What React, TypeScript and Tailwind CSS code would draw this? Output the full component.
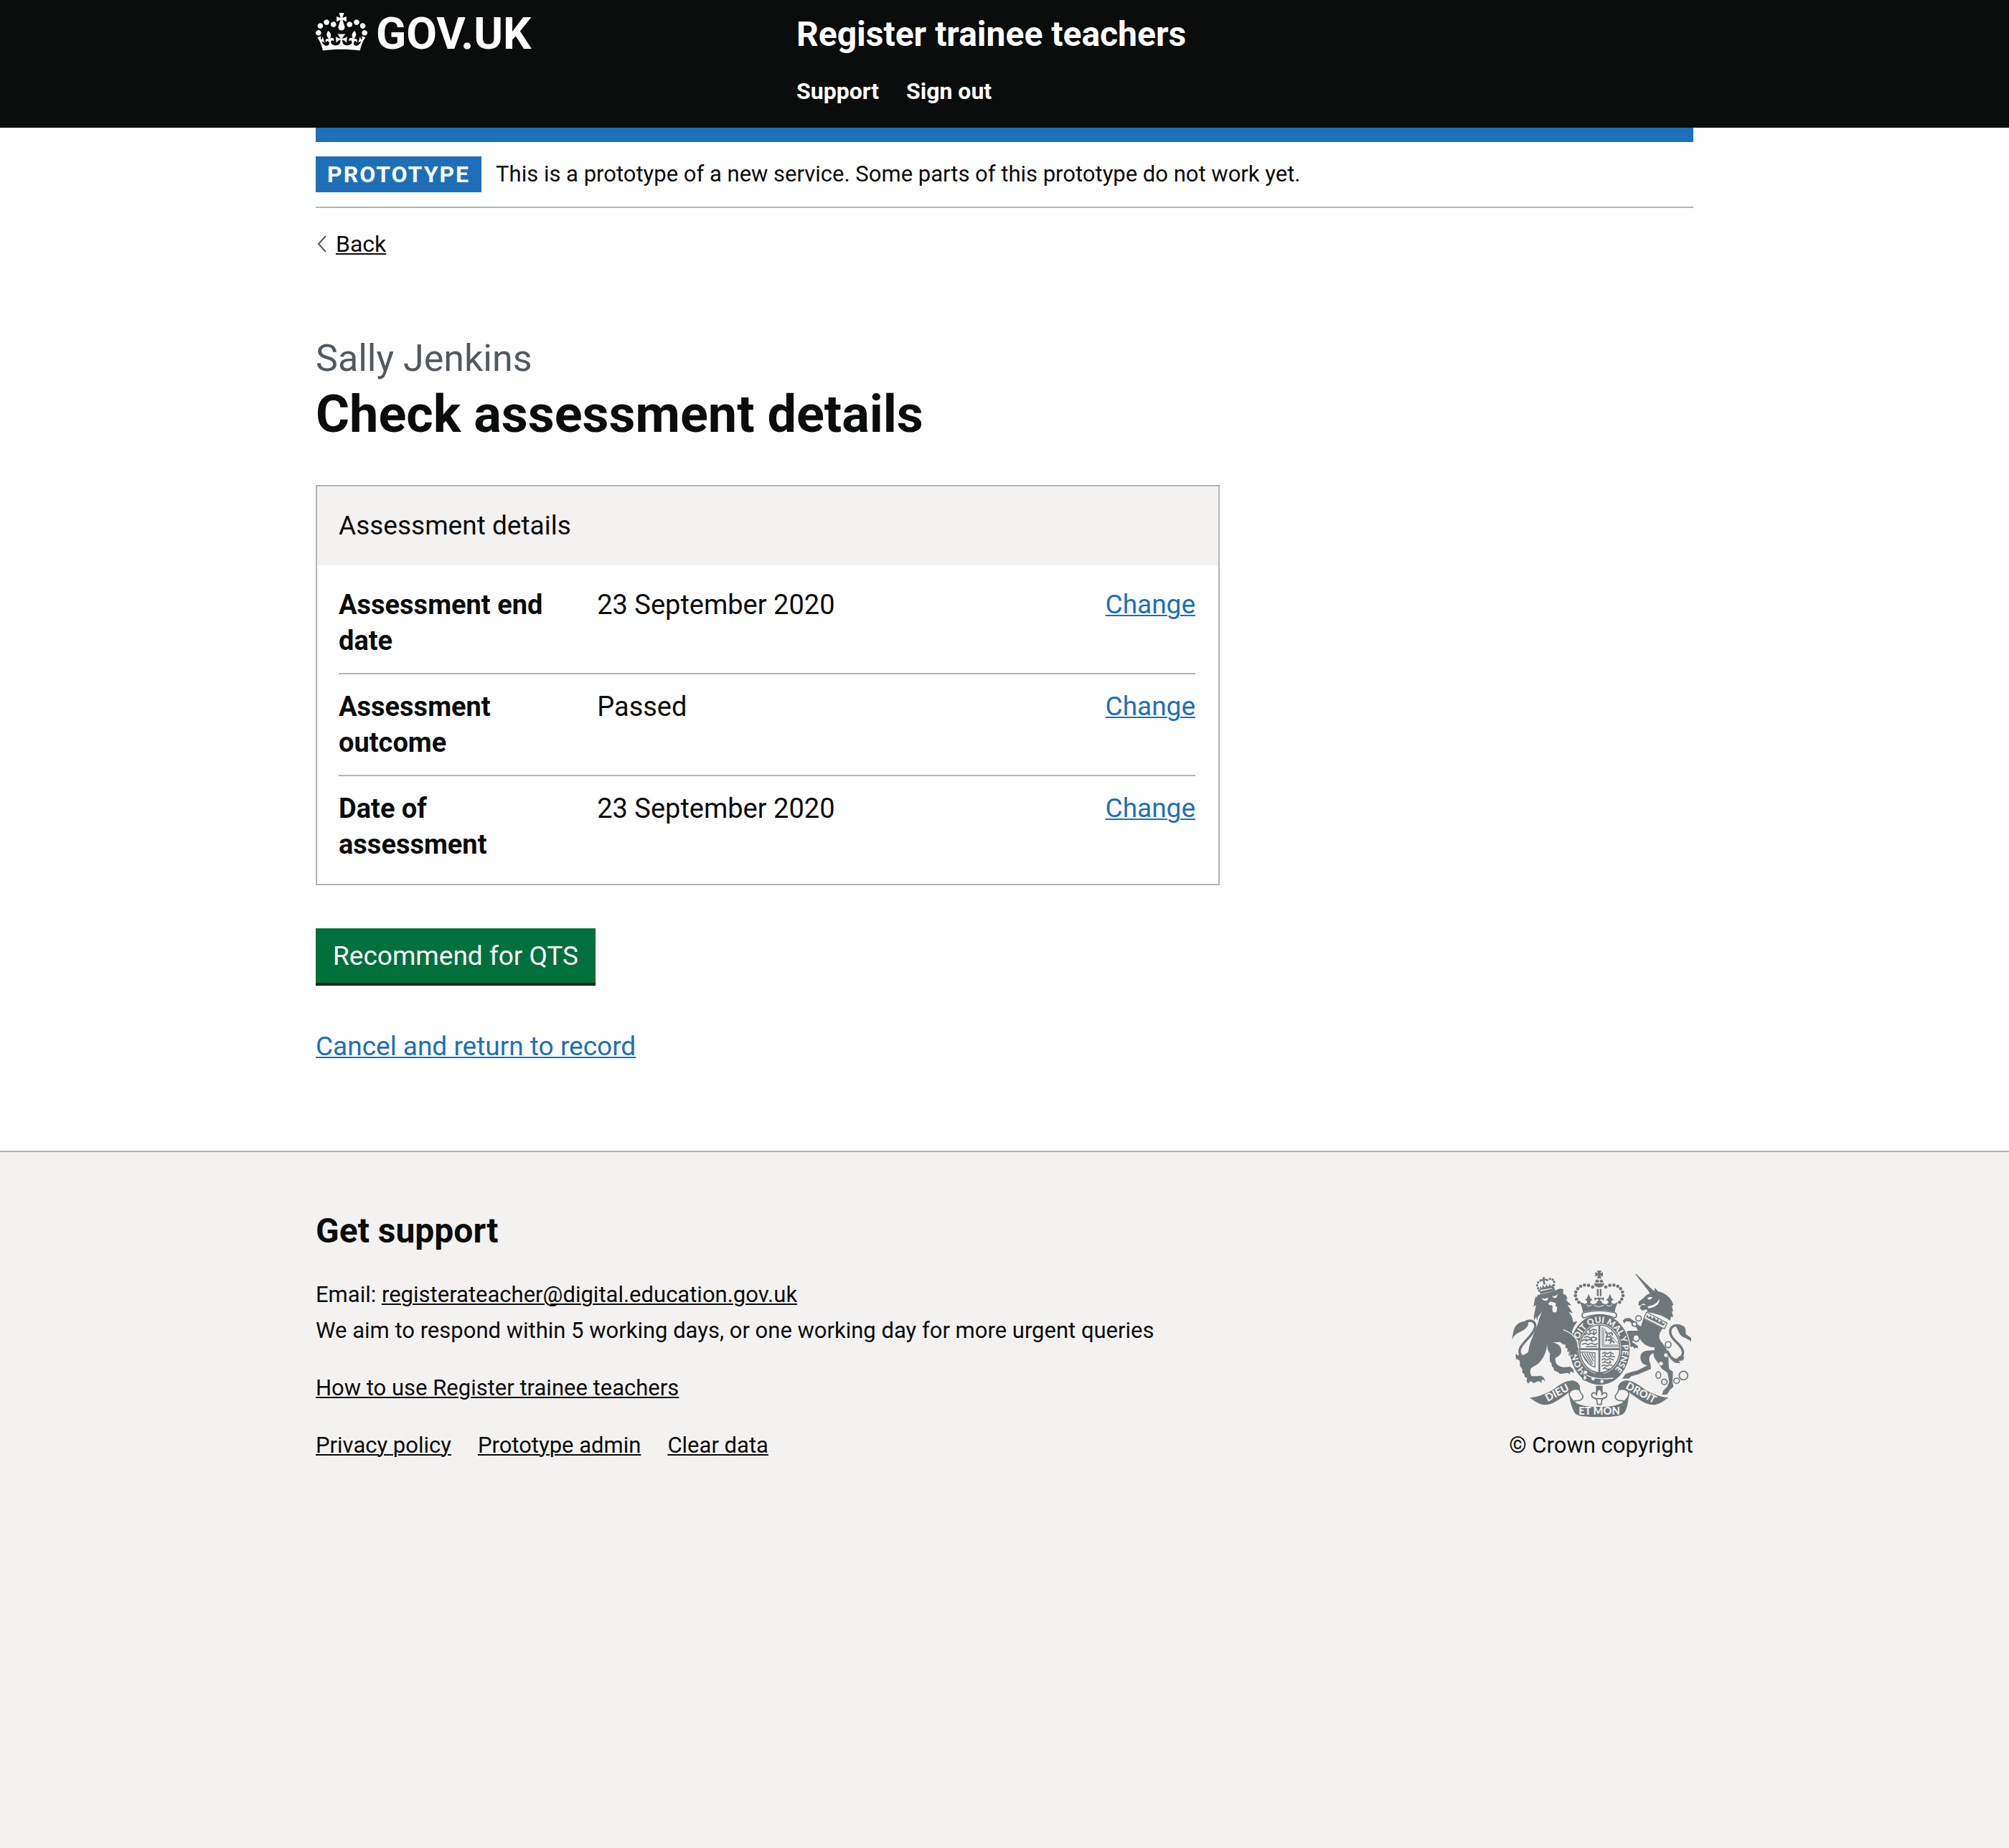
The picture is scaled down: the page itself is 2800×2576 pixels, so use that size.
import React from "react";

const answers = [
  { key: "Assessment end date", value: "23 September 2020" },
  { key: "Assessment outcome", value: "Passed" },
  { key: "Date of assessment", value: "23 September 2020" },
];

const footerLinks = ["Privacy policy", "Prototype admin", "Clear data"];

const link = "underline decoration-2 underline-offset-2";

function CrownLogo() {
  return (
    <svg viewBox="0 0 132 97" className="h-[53px] w-[72px] shrink-0" fill="currentColor" aria-hidden="true">
      <path
        fillRule="evenodd"
        d="M25 30.2c3.5 1.5 7.7-.2 9.1-3.7 1.5-3.6-.2-7.8-3.9-9.2-3.6-1.4-7.6.3-9.1 3.9-1.4 3.5.3 7.5 3.9 9zM9 39.5c3.6 1.5 7.8-.2 9.2-3.7 1.5-3.6-.2-7.8-3.9-9.1-3.6-1.5-7.6.2-9.1 3.8-1.4 3.5.3 7.5 3.8 9zM4.4 57.2c3.5 1.5 7.7-.2 9.1-3.8 1.5-3.6-.2-7.7-3.9-9.1-3.5-1.5-7.6.3-9.1 3.8-1.4 3.5.3 7.6 3.9 9.1zm38.3-21.4c3.5 1.5 7.7-.2 9.1-3.8 1.5-3.6-.2-7.7-3.9-9.1-3.6-1.5-7.6.3-9.1 3.8-1.3 3.6.4 7.7 3.9 9.1zm64.4-5.6c-3.6 1.5-7.8-.2-9.1-3.7-1.5-3.6.2-7.8 3.8-9.2 3.6-1.4 7.7.3 9.2 3.9 1.3 3.5-.4 7.5-3.9 9zm15.9 9.3c-3.6 1.5-7.7-.2-9.1-3.7-1.5-3.6.2-7.8 3.7-9.1 3.6-1.5 7.7.2 9.2 3.8 1.5 3.5-.3 7.5-3.8 9zm4.7 17.7c-3.6 1.5-7.8-.2-9.2-3.8-1.5-3.6.2-7.7 3.9-9.1 3.6-1.5 7.7.3 9.2 3.8 1.3 3.5-.4 7.6-3.9 9.1zM89.3 35.8c-3.6 1.5-7.8-.2-9.2-3.8-1.4-3.6.2-7.7 3.9-9.1 3.6-1.5 7.7.3 9.2 3.8 1.4 3.6-.3 7.7-3.9 9.1zM69.7 17.7l8.9 4.7V9.3l-8.9 2.8c-.2-.3-.5-.6-.9-.9L72.4 0H59.6l3.5 11.2c-.3.3-.6.5-.9.9l-8.8-2.8v13.1l8.8-4.7c.3.3.6.7.9.9l-5 15.4v.1c-.2.8-.4 1.6-.4 2.4 0 4.1 3.1 7.5 7 8.1h.2c.3 0 .7.1 1 .1.4 0 .7 0 1-.1h.2c4-.6 7.1-4.1 7.1-8.1 0-.8-.1-1.7-.4-2.4V34l-5.1-15.4c.4-.2.7-.6 1-.9zM66 92.8c16.9 0 32.8 1.1 47.1 3.2 4-16.9 8.9-26.7 14-33.5l-9.6-3.4c1 4.9 1.1 7.2 0 10.2-1.5-1.4-3-4.3-4.2-8.7L108.6 76c2.8-2 5-3.2 7.5-3.3-4.4 9.4-10 11.9-13.6 11.2-4.3-.8-6.3-4.6-5.6-7.9 1-4.7 5.7-5.9 8-.5 4.3-8.7-3-11.4-7.6-8.8 7.1-7.2 7.9-13.5 2.1-21.1-8 6.1-8.1 12.3-4.5 20.8-4.7-5.4-12.1-2.5-9.5 6.2 3.4-5.2 7.9-2 7.2 3.1-.6 4.3-6.4 7.8-13.5 7.2-10.3-.9-10.9-8-11.2-13.8 2.5-.5 7.1 1.8 11 7.3L80.2 60c-4.1 4.4-8 5.3-12.3 5.4 1.4-4.4 8-11.6 8-11.6H55.5s6.4 7.2 7.9 11.6c-4.2-.1-8-1-12.3-5.4l1.4 16.4c3.9-5.5 8.5-7.7 10.9-7.3-.3 5.8-.9 12.8-11.1 13.8-7.2.6-12.9-2.9-13.5-7.2-.7-5 3.8-8.3 7.1-3.1 2.7-8.7-4.6-11.6-9.4-6.2 3.7-8.5 3.6-14.7-4.6-20.8-5.8 7.6-5 13.9 2.2 21.1-4.7-2.6-11.9.1-7.7 8.8 2.3-5.5 7.1-4.2 8.1.5.7 3.3-1.3 7.1-5.7 7.9-3.5.7-9-1.8-13.5-11.2 2.5.1 4.7 1.3 7.5 3.3l-4.7-15.4c-1.2 4.4-2.7 7.2-4.3 8.7-1.1-3-.9-5.3 0-10.2l-9.5 3.4c5 6.9 9.9 16.7 14 33.5 14.8-2.1 30.8-3.2 47.7-3.2z"
      />
    </svg>
  );
}

const crownBeads = [
  [410, 135], [393, 128], [376, 127], [360, 132], [348, 142], [340, 156], [338, 171], [343, 186], [352, 199],
];
const lionCrownBeads = [
  [192, 108], [182, 116], [178, 128], [182, 140], [187, 150], [220, 106], [232, 101], [243, 104], [249, 114], [248, 127], [245, 138],
];
const chainLinks = [
  [602, 266, 12, 11], [585, 290, 10, 9], [592, 349, 13, 14], [726, 376, 12, 13], [685, 503, 10, 14],
  [710, 532, 12, 11], [761, 527, 12, 11], [790, 505, 18, 18],
];

/* Royal coat of arms: lion and unicorn holding the garter, with the motto ribbon below. */
function RoyalArms() {
  const ink = "#6f777b";
  const paper = "#f3f2f1";
  return (
    <svg viewBox="72 63 750 618" className="h-[206px] w-[250px]" fill={ink} aria-hidden="true">
      {/* lion */}
      <path d="M172 182l10-14c30-6 64-14 92-26l14 2-2 18 14 8 5 18-9-2 26 26-17-2 22 34-16-4c10 14 16 26 18 42l18-4-16 24-8 20 28 36 4 24-2 30-10 12-5-6-1 12-9-8-4 9-7-8-8-1 3-14-8-3 2-12-10-4 1-12-14-4-8-8-32 2c24 4 38 20 36 38-2 14-14 22-25 27 0 14 2 24 12 30 8 6 20 10 32 8l18-2 14 12 2 16-9-7-8 2 1 10-10-7-10 2-22 3-12-10-12-4-4-13-6-4-2-14-6-6c-2-12-2-24 0-34-8-10-12-22-12-38-4 30-12 56-38 80-14 10-28 14-32 24-2 10 0 20 4 28l20 0 20-2 12 8 6 16-8-7-8 2 2 12-12-8-10 2-10 6-16-8-10 10-6-10 2-14-10-4-2-12-8-6 0-14-10-14 0-28 10-12 14-2 10-8c4-30 8-46 16-64 10-28 24-54 30-82l12-30-16 20-4 18-4-18-8 16-2-18 10-46-11 6 4-24 6-26z" />
      <path d="M196 180c8 6 18 6 28-2l-2 12c-10 6-20 2-26-10zM240 172c8 4 16 0 24-8l-4 14c-6 6-16 4-20-6z" fill={paper} />
      <path d="M224 204l10-8 10 2 14 6-4 8 8 8-2 16c-4 8-14 8-18-2-2-8 2-14 0-22l-14-2z" fill={paper} />
      {/* lion's crown */}
      {lionCrownBeads.map(([x, y]) => (
        <circle key={`${x}-${y}`} cx={x} cy={y} r="5" />
      ))}
      <path d="M201 94l10 0-2 8 8-2 0 8-8-1 4 16-8 2-4-17-7 3-1-8 8 0zM188 154l62-14 4 9-62 15zM190 148l0-16 8 8 4-14 8 12 8-14 5 11 8-14 4 12 9-10 1 16z" />
      {/* lion's tail */}
      <path d="M72 356c6-20 4-44 18-60 16-16 36-20 50-14 4 6-2 20-14 30-18 14-38 12-54 44z" />
      <path d="M128 282c22-12 44-6 42 20-4 30-44 56-60 84-10 18-6 34 8 40" fill="none" stroke={ink} strokeWidth="10" />
      <path d="M163 392l-12 32-22 12 10 4-32 10-3-8-14-6-3-22 12 8c4-10 12-10 16-10l-8 10c18-2 28-10 36-16z" />

      {/* unicorn's body, then neck and head */}
      <path d="M622 268L704 308C688 326 684 342 694 360C704 374 716 384 722 402C730 422 726 450 730 478L746 490L744 530L748 552L732 566L722 584L700 586L706 568L722 552L730 532L724 496C714 484 702 484 692 466C684 446 666 442 664 412C646 418 642 440 652 456L654 478L600 500L572 508L562 518L534 518L548 498L574 490L598 484L640 462C622 462 612 452 610 432C608 408 626 398 668 400L670 388C640 386 620 374 608 352L594 366L578 358L576 366L598 380L600 392L590 388L586 394L578 384L568 386L564 370L548 346L546 328L558 318L600 318L592 302L578 294L566 280L550 278L542 288L536 276L546 266L564 264L582 276L598 292L612 300Z" />
      <path d="M588 81L593 81L658 144L668 152L670 138L684 154C704 158 722 168 734 184C742 194 746 204 748 212L741 212L747 238L741 236L747 262L738 258L734 276L722 268C700 252 670 246 640 240L636 228L618 234L606 222L614 214L602 212L603 196C614 188 626 180 636 168L650 162L644 152Z" />
      <path d="M638 182C644 176 652 176 660 178C656 188 646 192 638 182Z" fill={paper} />
      <path d="M688 184C694 204 672 222 642 224L640 216C664 212 682 204 688 184ZM606 212L624 204L634 212L622 210Z" fill={paper} />
      <path d="M636 240L722 286L710 310L624 266Z" fill={paper} stroke={ink} strokeWidth="4" />
      <path d="M634 262L638 250L645 262L654 254L657 268L668 260L676 274L684 268L686 282L698 276L704 288L714 286L706 298Z" />
      {chainLinks.map(([x, y, rx, ry]) => (
        <ellipse key={`${x}-${y}`} cx={x} cy={y} rx={rx} ry={ry} fill={paper} stroke={ink} strokeWidth="5" />
      ))}
      <circle cx="717" cy="420" r="8" fill={paper} />
      <circle cx="696" cy="455" r="8" fill={paper} />
      {/* unicorn's tail */}
      <path d="M752 294c20-4 40 2 46 14l2 24 22 16 0 16c-14-16-30-14-42-26-12-10-12-30-28-44z" />
      <path d="M776 298c-30-10-46 10-40 34 8 30 50 44 52 76 0 14-8 22-20 24" fill="none" stroke={ink} strokeWidth="10" />
      <path d="M724 396l16 28 14 10c8 0 14-2 20-6l20-2-6 16-18 2 8 10-22-2-16-12-18-22z" />

      {/* garter */}
      <ellipse cx="440" cy="397" rx="129" ry="150" fill={paper} />
      <ellipse cx="440" cy="397" rx="125" ry="147" />
      <ellipse cx="440" cy="394" rx="89" ry="105" fill={paper} />
      <path id="garter-line" d="M388 490A94 112 0 0 1 346 397A94 112 0 0 1 440 285A94 112 0 0 1 534 397A94 112 0 0 1 450 508" fill="none" />
      <text fill={paper} fontFamily="Lato" fontWeight="900" fontSize="36">
        <textPath href="#garter-line" startOffset="6">
          HONI <tspan dx="18">SOIT QUI MAL Y PENSE</tspan>
        </textPath>
      </text>
      {/* lion's forearm over the garter */}
      <path d="M290 306c24 10 46 30 54 56l6 30-6 8 2 22-10-9-6 14-9-12-9 4 2-16-9-4 3-12-12-4 2-10-12-6z" />
      <path d="M288 314c26 10 50 26 58 50l4 26" fill="none" stroke={paper} strokeWidth="4" />
      {/* shield */}
      <clipPath id="shield">
        <ellipse cx="440" cy="394" rx="82" ry="98" />
      </clipPath>
      <ellipse cx="440" cy="394" rx="84" ry="100" fill="none" stroke={ink} strokeWidth="5" />
      <g clipPath="url(#shield)" fill="none" stroke={ink}>
        <path d="M438 290v210M350 395h180" strokeWidth="8" />
        <path d="M376 336l10-8 8 6 12-6 10 6 12-12M374 346l14-4 12 6 14-4 14 6M364 362l10-8 10 6 14-6 12 8 18-8M366 376l12-6 12 6 16-6 12 6 14-4M392 312l10 6 12-6 14 4M396 320l6 12M416 318l-2 12M384 350v8M404 350l4 8M424 344v10M382 384h46" strokeWidth="5" />
        <path d="M450 414l10-6 12 6 12-6 14 8M450 426l12-4 12 6 14-4 16 4M448 440l10-6 12 6 12-6 16 6M450 452l12-4 12 6 14-4M448 466l10-6 12 6 12-6 12 4M452 478l10-4 12 6 8-4M462 414v10M484 414l2 10M462 442v8M482 442l2 8M462 468v8" strokeWidth="5" />
        <path d="M450 304v80h72M456 312v66h62M454 306l64 66" strokeWidth="3" />
        <path d="M462 322l10 10-4 12 14-2 8 10-12 6 14 2 10 8M476 330l14-4 4 12M470 350l-6 12M488 362l-6 10" strokeWidth="6" />
        <path d="M364 408c18-4 36 4 56 2v60c-22-4-44-28-54-60zM376 412l30 50M386 412l24 44M396 412l18 34M406 412l10 20M370 420l26 38" strokeWidth="4" />
      </g>
      <path d="M428 492h22l8 8-10 4h-20l-8-4z" />
      {/* garter buckle */}
      <path d="M374 486c20 22 54 34 90 36l36-10 4 10c-30 22-92 34-138-6z" />
      <path d="M372 494c20 18 58 30 124 22" fill="none" stroke={paper} strokeWidth="4" />
      <path d="M374 484c12-4 20 4 14 14l-12 4c12 4 14 16 2 24l-10-6c8-10 4-16 0-20z" fill={paper} stroke={ink} strokeWidth="4" />
      <circle cx="412" cy="519" r="7" fill={paper} />
      <circle cx="449" cy="530" r="7" fill={paper} />

      {/* crown */}
      {crownBeads.map(([x, y]) => (
        <React.Fragment key={`${x}-${y}`}>
          <circle cx={x} cy={y} r="7" />
          <circle cx={875 - x} cy={y} r="7" />
        </React.Fragment>
      ))}
      <path d="M428 66h19l-5 12 11-5v19l-11-6 5 13h-19l5-13-12 6V73l12 5zM424 104h12v12h-16zM440 104h11l5 12h-16zM416 120h43c-2 22-41 22-43 0zM428 143h7v30h-7zM440 143h7v30h-7z" />
      <path d="M360 198l18 8 10-6-2-8-8-4 8-6 7-18 8 18 8 6-8 6-1 8 12 6 16-6 0-8 8-2-8-13h20l-8 13 9 2 0 8 15 6 12-6-1-8-8-6 8-6 8-18 7 18 8 6-8 4-2 8 10 6 18-8c-8 16-12 28-13 42-40-12-88-12-134 0-1-14-5-26-13-42z" />
      <path d="M418 178l14 6-14 8zM457 178l-14 6 14 8z" />
      <path d="M384 209l10 7 12-6M416 212l20 6 22-6M468 211l12 5 12-7" fill="none" stroke={paper} strokeWidth="3" />
      <path d="M374 242c38-10 88-10 128 0 12 4 10 22-2 22-36-18-86-18-124 0-12 0-14-18-2-22z" fill={paper} stroke={ink} strokeWidth="5" />

      {/* fleur-de-lis badge */}
      <path d="M424 548h28v32h-28z" />
      <path d="M438 560c8 8 14 18 10 28 6-14 20-14 22-2 0 10-8 14-16 14l-6 10-2 16h-16l-2-16-6-10c-8 0-16-4-16-14 2-12 16-12 22 2-4-10 2-20 10-28zM418 602h40" fill={paper} stroke={ink} strokeWidth="5" />

      {/* motto ribbon */}
      <path d="M146 598c40-4 78-20 104-38 26-18 44-32 74-34 18 2 30 12 34 26l-2 16c-20-8-38-2-48 10-34 24-64 50-98 50-24 0-42-16-64-30z" />
      <path d="M728 598c-40-4-78-20-104-38-26-18-44-32-74-34-18 2-30 12-34 26l2 16c20-8 38-2 48 10 34 24 64 50 98 50 24 0 42-16 64-30z" />
      <path d="M356 566c-20-8-38-2-44 14 0 14 10 24 16 34l14-4c12 2 26-4 28-16 0-12-16-16-14-28z" fill={paper} stroke={ink} strokeWidth="5" />
      <path d="M518 566c20-8 38-2 44 14 0 14-10 24-16 34l-14-4c-12 2-26-4-28-16 0-12 16-16 14-28z" fill={paper} stroke={ink} strokeWidth="5" />
      <path d="M312 582c6 12 16 28 30 38 28 14 62 16 96 16s66-2 94-16c14-10 24-26 30-38-2 28-6 52-14 70-6 14-18 20-34 22-50 6-104 6-154 0-16-2-24-8-30-22-8-18-16-42-18-70z" />
      <g fill={paper} fontFamily="Lato" fontWeight="900" fontSize="44" textAnchor="middle">
        <text x="262" y="592" transform="rotate(-28 262 578)">DIEU</text>
        <text x="613" y="592" transform="rotate(28 613 577)">DROIT</text>
        <text x="438" y="670">ET MON</text>
      </g>
    </svg>
  );
}

function Header() {
  return (
    <header className="bg-[#0b0c0c] text-white">
      <div className="mx-auto flex max-w-[1920px] pt-[18px] pb-[31px]">
        <div className="w-[670px] shrink-0">
          <a href="#" aria-label="GOV.UK" className="flex w-fit items-start gap-[12px]">
            <CrownLogo />
            <span className="text-[62px] leading-[58px] font-bold">GOV.UK</span>
          </a>
        </div>
        <div className="flex flex-col gap-[29px]">
          <a href="#" className="text-[48px] leading-[60px] font-bold">
            Register trainee teachers
          </a>
          <nav className="flex gap-[38px] text-[32px] leading-[40px] font-bold">
            <a href="#">Support</a>
            <a href="#">Sign out</a>
          </nav>
        </div>
      </div>
    </header>
  );
}

export default function App() {
  return (
    <div className="flex min-h-screen flex-col bg-white font-[Roboto,sans-serif] text-[#0b0c0c]">
      <Header />

      <div className="mx-auto w-full max-w-[1920px]">
        <div className="flex items-center gap-[20px] border-t-20 border-b-2 border-t-[#1d70b8] border-b-[#b1b4b6] py-[20px] text-[31px] leading-[40px]">
          <strong className="bg-[#1d70b8] px-[16px] py-[5px] text-[32px] font-bold tracking-[2px] text-white uppercase">
            Prototype
          </strong>
          <span>This is a prototype of a new service. Some parts of this prototype do not work yet.</span>
        </div>

        <a href="#" className="mt-[30px] flex w-fit items-center gap-[12px] text-[32px] leading-[40px]">
          <svg viewBox="0 0 16 24" className="h-[24px] w-[16px]" fill="none" stroke="#505a5f" strokeWidth="2" aria-hidden="true">
            <path d="M14 1L4 12l10 11" />
          </svg>
          <span className={link}>Back</span>
        </a>

        <main className="pt-[110px] pb-[120px] text-[37px] leading-[50px]">
          <h1 className="mb-[58px] text-[72px] leading-[80px] font-bold">
            <span className="mb-[8px] block text-[52px] leading-[60px] font-normal text-[#505a5f]">Sally Jenkins</span>
            Check assessment details
          </h1>

          <section className="mb-[60px] max-w-[1260px] border-2 border-[#b1b4b6]">
            <h2 className="bg-[#f3f2f1] p-[30px]">Assessment details</h2>
            <dl className="py-[10px] pr-[32px] pl-[30px]">
              {answers.map((row) => (
                <div key={row.key} className="flex border-b-2 border-[#b1b4b6] py-[20px] last:border-b-0">
                  <dt className="w-[30%] pr-[40px] text-[38px] font-bold">{row.key}</dt>
                  <dd className="grow pl-[2px] text-[38px]">{row.value}</dd>
                  <dd>
                    <a href="#" className={`${link} text-[#1d70b8]`} aria-label={`Change ${row.key.toLowerCase()}`}>
                      Change
                    </a>
                  </dd>
                </div>
              ))}
            </dl>
          </section>

          <button
            type="button"
            className="mb-[60px] block border-b-4 border-[#002d18] bg-[#00703c] px-[24px] pt-[14px] pb-[12px] text-white"
          >
            Recommend for QTS
          </button>
          <a href="#" className={`${link} block w-fit text-[#1d70b8]`}>
            Cancel and return to record
          </a>
        </main>
      </div>

      <footer className="grow border-t-2 border-[#b1b4b6] bg-[#f3f2f1] pt-[80px] pb-[50px] text-[31px] leading-[50px]">
        <div className="mx-auto flex max-w-[1920px] items-end justify-between">
          <div>
            <h2 className="mb-[34px] text-[48px] leading-[60px] font-bold">Get support</h2>
            <p>
              Email:{" "}
              <a href="#" className={link}>
                registerateacher@digital.education.gov.uk
              </a>
            </p>
            <p className="mb-[30px]">
              We aim to respond within 5 working days, or one working day for more urgent queries
            </p>
            <p className="mb-[30px]">
              <a href="#" className={link}>
                How to use Register trainee teachers
              </a>
            </p>
            <nav className="flex gap-[37px]">
              {footerLinks.map((label) => (
                <a key={label} href="#" className={link}>
                  {label}
                </a>
              ))}
            </nav>
          </div>
          <a href="#" className="flex flex-col items-center gap-[14px]">
            <RoyalArms />
            <span>© Crown copyright</span>
          </a>
        </div>
      </footer>
    </div>
  );
}
